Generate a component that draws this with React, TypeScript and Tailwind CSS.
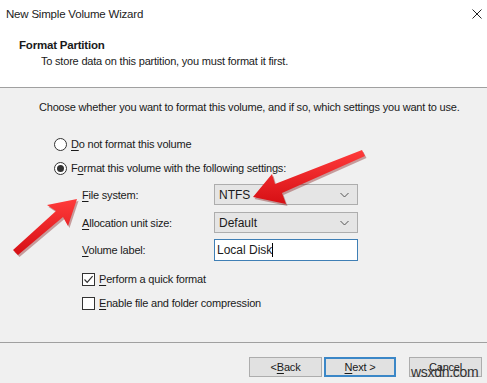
function Key({ children }: { children: string }) {
  return <span className="underline underline-offset-[2px] decoration-1">{children}</span>;
}

function Radio({ checked }: { checked?: boolean }) {
  return (
    <span className="w-[13px] h-[13px] rounded-full border border-[#333333] bg-white flex items-center justify-center shrink-0">
      {checked && <span className="w-[7px] h-[7px] rounded-full bg-[#333333]" />}
    </span>
  );
}

function Checkbox({ checked }: { checked?: boolean }) {
  return (
    <span className="w-[13px] h-[13px] border border-[#333333] bg-white flex items-center justify-center shrink-0">
      {checked && (
        <svg width="11" height="11" viewBox="0 0 11 11">
          <path d="M1.5 5.5 L4.2 8.3 L9.6 2.2" fill="none" stroke="#333" strokeWidth="1.2" />
        </svg>
      )}
    </span>
  );
}

function Combo({ value }: { value: string }) {
  return (
    <div className="w-[144px] h-[21px] bg-[#e5e5e5] border border-[#adadad] flex items-center justify-between pl-[4px] pr-[8px]">
      <span className="text-[12px] tracking-normal">{value}</span>
      <svg width="9" height="6" viewBox="0 0 9 6">
        <path d="M0.5 1 L4.5 5 L8.5 1" fill="none" stroke="#555" strokeWidth="1" />
      </svg>
    </div>
  );
}

function Button({ children, focused }: { children: React.ReactNode; focused?: boolean }) {
  return (
    <div
      className={`h-[20px] bg-[#e1e1e1] flex items-center justify-center ${
        focused ? 'w-[72px] border-2 border-[#3b87c7]' : 'w-[73px] border border-[#adadad]'
      }`}
    >
      {children}
    </div>
  );
}

export default function App() {
  return (
    <div
      className="relative w-[487px] h-[383px] bg-[#f0f0f0] overflow-hidden text-[11px] text-[#1a1a1a] leading-[16px] whitespace-nowrap tracking-[-0.2px]"
      style={{ fontFamily: '"Liberation Sans", Arial, sans-serif' }}
    >
      <div className="h-[88px] bg-white border-b border-[#a0a0a0]">
        <div className="h-[27px] flex items-center justify-between pl-[6px] pr-[5px]">
          <span className="text-[#222] text-[11.5px]">New Simple Volume Wizard</span>
          <svg width="10" height="10" viewBox="0 0 10 10">
            <path d="M0.5 0.5 L9.5 9.5 M9.5 0.5 L0.5 9.5" stroke="#222" strokeWidth="1" />
          </svg>
        </div>
        <div className="mt-[10px] pl-[19px] font-bold text-[11.5px]">Format Partition</div>
        <div className="pl-[41px]">To store data on this partition, you must format it first.</div>
      </div>

      <div className="mt-[11px] pl-[39px] h-[16px]">
        Choose whether you want to format this volume, and if so, which settings you want to use.
      </div>

      <div className="mt-[21px] pl-[54px] h-[16px] flex items-center gap-[4px]">
        <Radio />
        <span>
          <Key>D</Key>o not format this volume
        </span>
      </div>
      <div className="mt-[8px] pl-[54px] h-[16px] flex items-center gap-[4px]">
        <Radio checked />
        <span>
          F<Key>o</Key>rmat this volume with the following settings:
        </span>
      </div>

      <div className="mt-[8px] pl-[82px] flex items-center">
        <span className="w-[132px]">
          <Key>F</Key>ile system:
        </span>
        <Combo value="NTFS" />
      </div>
      <div className="mt-[7px] pl-[82px] flex items-center">
        <span className="w-[132px]">
          <Key>A</Key>llocation unit size:
        </span>
        <Combo value="Default" />
      </div>
      <div className="mt-[6px] pl-[82px] flex items-center">
        <span className="w-[132px]">
          <Key>V</Key>olume label:
        </span>
        <div className="w-[144px] h-[22px] bg-white border border-[#3f7fb5] flex items-center pl-[2px]">
          <span className="text-[12px] tracking-normal">Local Disk</span>
          <span className="w-px h-[14px] bg-black" />
        </div>
      </div>

      <div className="mt-[10px] pl-[82px] h-[16px] flex items-center gap-[4px]">
        <Checkbox checked />
        <span>
          <Key>P</Key>erform a quick format
        </span>
      </div>
      <div className="mt-[8px] pl-[82px] h-[16px] flex items-center gap-[4px]">
        <Checkbox />
        <span>
          <Key>E</Key>nable file and folder compression
        </span>
      </div>

      <div className="mt-[31px] h-px bg-[#a0a0a0]" />

      <div className="mt-[14px] pl-[249px] flex items-center">
        <Button>
          &lt; <Key>B</Key>ack
        </Button>
        <div className="ml-[2px]">
          <Button focused>
            <Key>N</Key>ext &gt;
          </Button>
        </div>
        <div className="ml-[13px]">
          <Button>Cancel</Button>
        </div>
      </div>

      <span className="absolute left-[411px] top-[363px] text-[14px] leading-[18px] text-[#333] tracking-[-0.3px]">
        wsxdn.com
      </span>

      <svg className="absolute left-0 top-0 pointer-events-none" width="487" height="383" viewBox="0 0 487 383">
        <defs>
          <linearGradient id="red" x1="0" y1="0" x2="0" y2="1">
            <stop offset="0" stopColor="#ff3b3b" />
            <stop offset="1" stopColor="#d60f14" />
          </linearGradient>
        </defs>
        <g opacity="0.35" transform="translate(1.5 2)">
          <polygon points="253,197 272,174 275,184 362,150 365,156 282,193 286,204" fill="#7a0000" />
          <polygon points="77,199 47,205 56,211 13,250 18,255 63,217 68,226" fill="#7a0000" />
        </g>
        <polygon points="253,197 272,174 275,184 362,150 365,156 282,193 286,204" fill="url(#red)" />
        <polygon points="77,199 47,205 56,211 13,250 18,255 63,217 68,226" fill="url(#red)" />
      </svg>
    </div>
  );
}
